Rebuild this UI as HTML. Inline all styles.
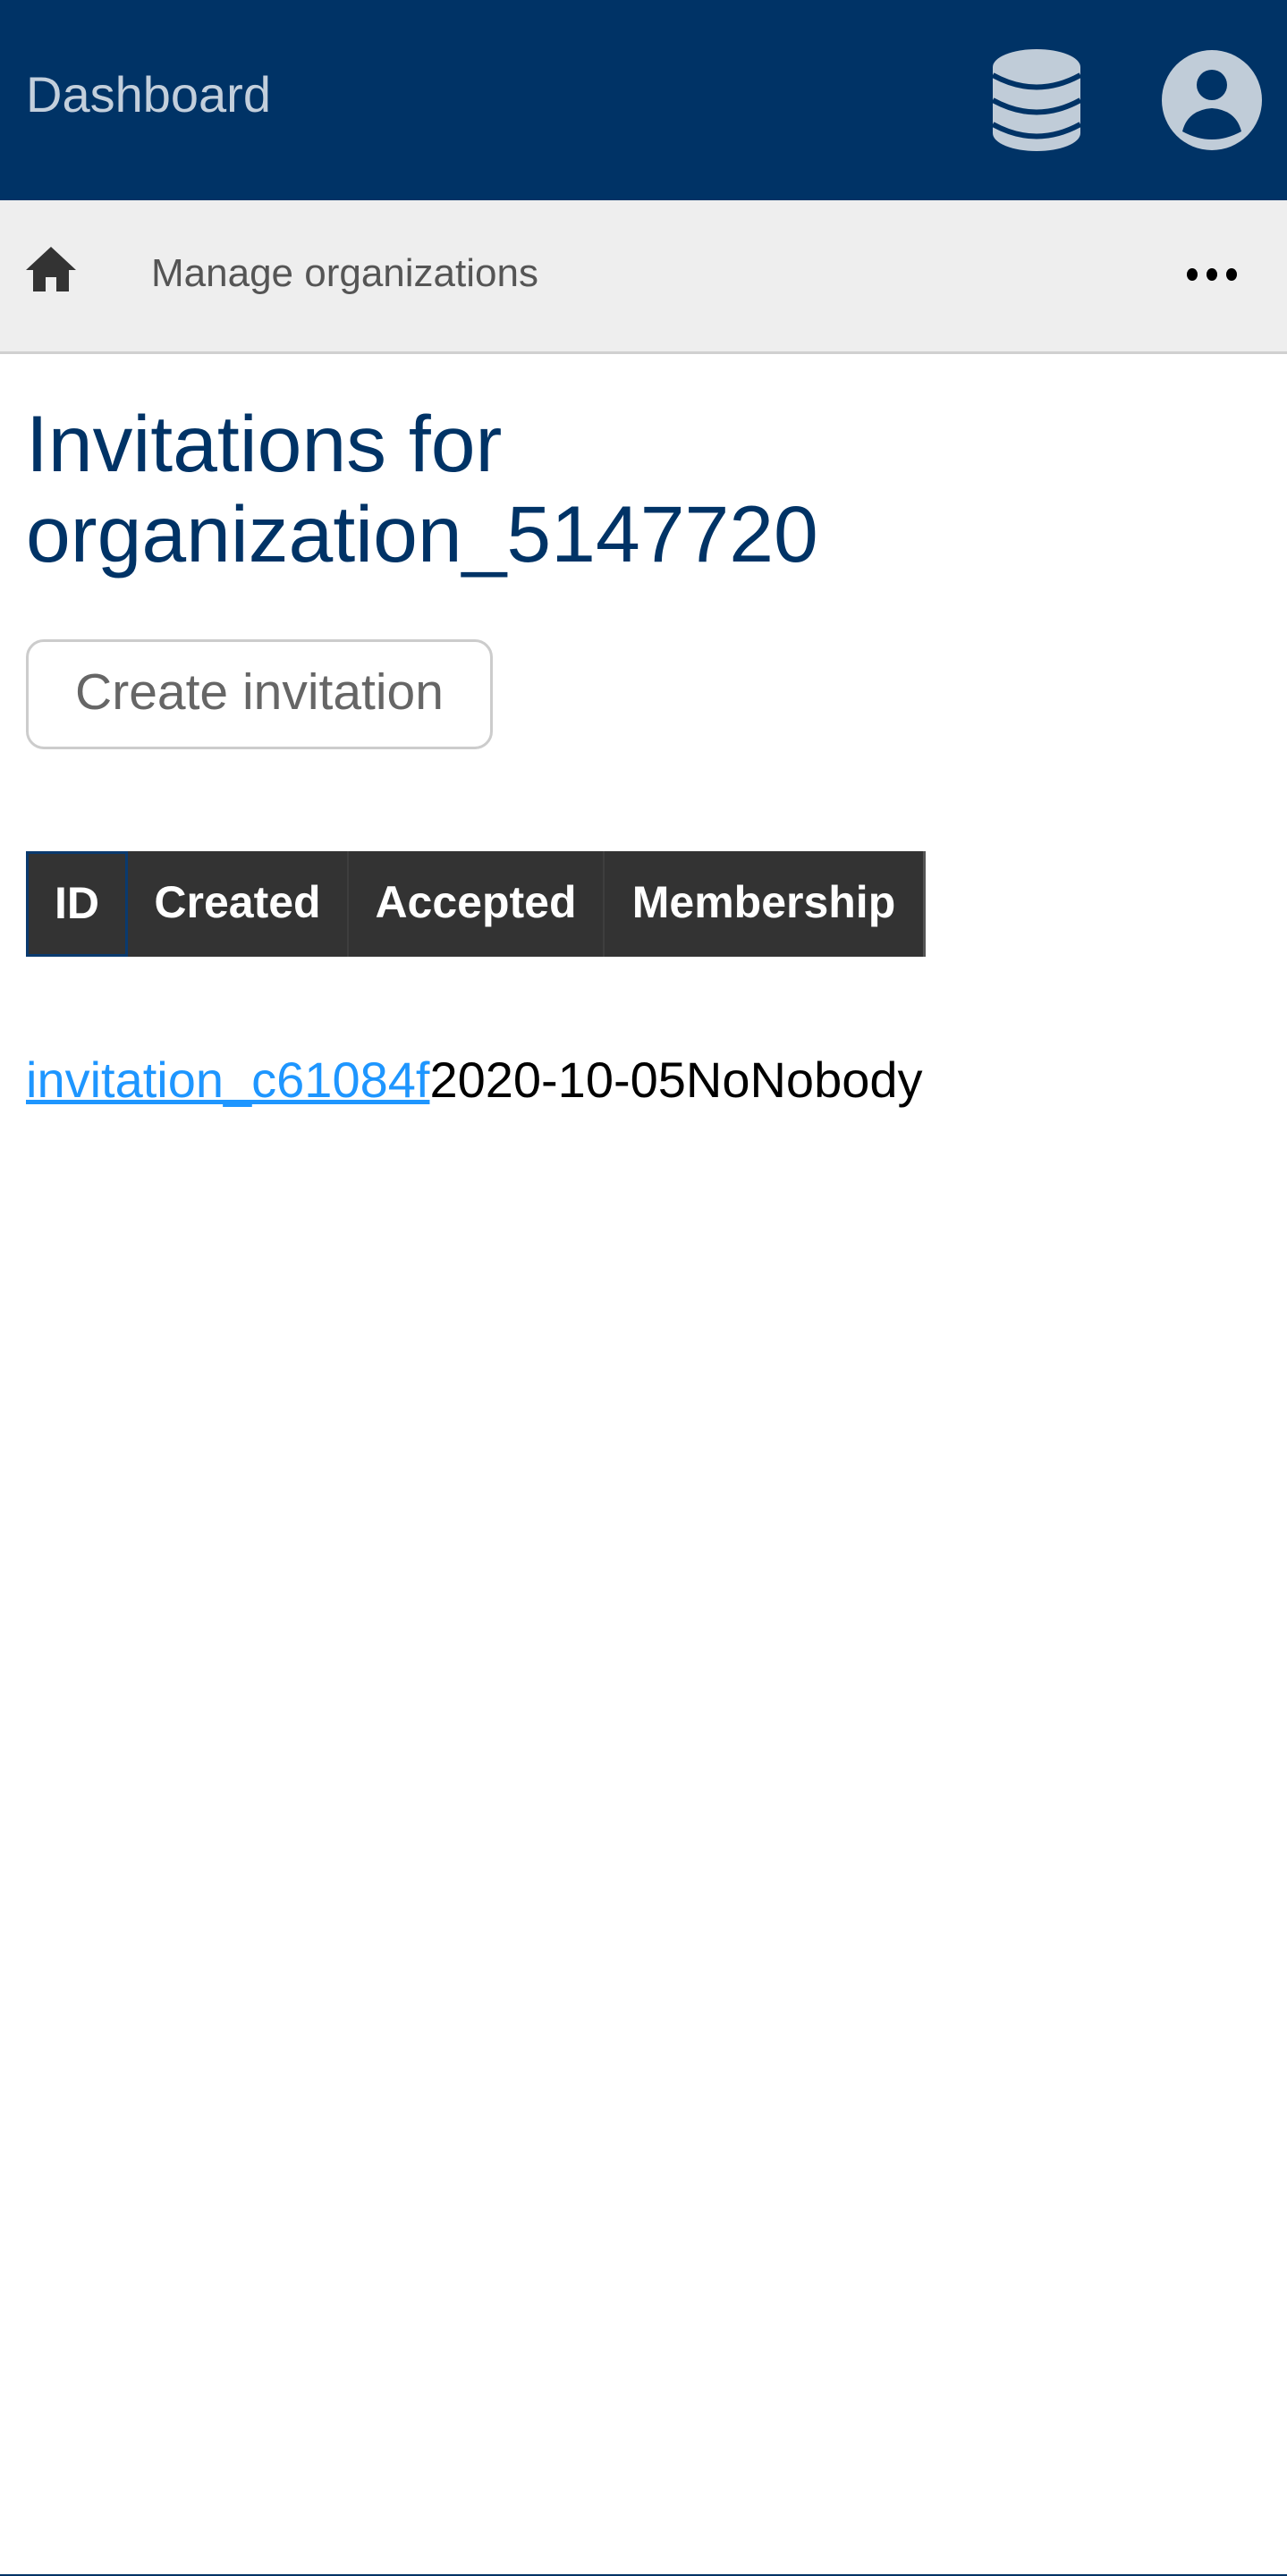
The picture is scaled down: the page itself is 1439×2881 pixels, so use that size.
<!DOCTYPE html>
<html><head><meta charset="utf-8"><style>
*{margin:0;padding:0;box-sizing:border-box}
html,body{width:1439px;height:2881px;overflow:hidden;background:#fff;font-family:"Liberation Sans",sans-serif;position:relative}
.hdr{position:absolute;left:0;top:0;width:1439px;height:224px;background:#003366}
.dash{position:absolute;left:29px;top:74px;font-size:56px;line-height:64px;color:#c3cfdc}
.bc{position:absolute;left:0;top:224px;width:1439px;height:172px;background:#eee;border-bottom:3px solid #d0d0d0}
.mo{position:absolute;left:169px;top:56px;font-size:44px;line-height:52px;color:#555}
h1{position:absolute;left:29px;top:446px;font-size:89.5px;line-height:101px;font-weight:normal;color:#003366}
.btn{position:absolute;left:29px;top:715px;width:522px;height:123px;border:3px solid #ccc;border-radius:20px;font-size:57px;color:#666;text-align:center;line-height:113px}
.th{position:absolute;top:952px;height:118px;background:#333;color:#fff;font-weight:bold;font-size:50px;line-height:114px;text-align:center;border-right:2px solid #3e3e3e}
.row{position:absolute;left:29px;top:1176px;font-size:56px;line-height:64px;color:#000;white-space:nowrap}
.row a{color:#1e96ff;text-decoration:underline}
.bot{position:absolute;left:0;top:2879px;width:1439px;height:2px;background:#003366}
</style></head><body>
<div class="hdr">
<div class="dash">Dashboard</div>
<svg style="position:absolute;left:1110px;top:55px" width="98" height="114" viewBox="0 0 98 114">
<path d="M0 20 A49 20 0 0 1 98 20 V94 A49 20 0 0 1 0 94Z" fill="#c0ccd8"/>
<g fill="none" stroke="#003366" stroke-width="6">
<path d="M0 29 Q49 56 98 29"/>
<path d="M0 57 Q49 84 98 57"/>
<path d="M0 84 Q49 111 98 84"/>
</g></svg>
<svg style="position:absolute;left:1298px;top:55px" width="114" height="114" viewBox="0 0 114 114">
<circle cx="57" cy="57" r="56" fill="#c0ccd8"/>
<circle cx="57" cy="40" r="17" fill="#003366"/>
<path d="M24 92 Q30 68 57 66 Q84 68 90 92 Q57 110 24 92Z" fill="#003366"/>
</svg>
</div>
<div class="bc">
<svg style="position:absolute;left:29px;top:52px" width="56" height="50" viewBox="0 0 56 50">
<path d="M28 0 L56 26 H48 V50 H34 V34 H22 V50 H8 V26 H0Z" fill="#333"/>
</svg>
<div class="mo">Manage organizations</div>
<svg style="position:absolute;left:1326px;top:74px" width="60" height="18" viewBox="0 0 60 18">
<g fill="#000"><ellipse cx="7" cy="9" rx="6" ry="7"/><ellipse cx="29" cy="9" rx="6" ry="7"/><ellipse cx="51" cy="9" rx="6" ry="7"/></g>
</svg>
</div>
<h1>Invitations for<br>organization_5147720</h1>
<div class="btn">Create invitation</div>
<div class="th" style="left:29px;width:114px;border:3px solid #0a3a6e;line-height:110px">ID</div>
<div class="th" style="left:143px;width:247px">Created</div>
<div class="th" style="left:390px;width:286px">Accepted</div>
<div class="th" style="left:676px;width:359px;border-right:3px solid #555">Membership</div>
<div class="row"><a>invitation_c61084f</a>2020-10-05NoNobody</div>
<div class="bot"></div>
</body></html>
